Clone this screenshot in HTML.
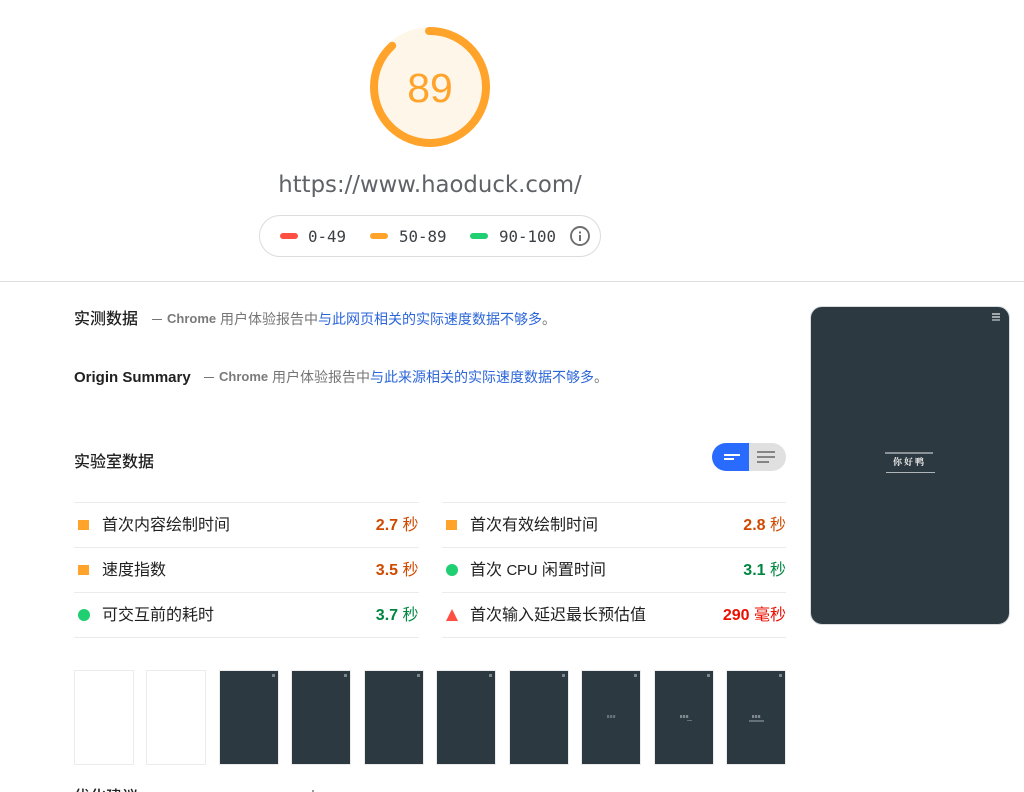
<!DOCTYPE html>
<html lang="zh-CN">
<head>
<meta charset="utf-8">
<title>PageSpeed Insights</title>
<style>
html,body{margin:0;padding:0;background:#fff;width:1024px;height:792px;overflow:hidden}
#w{position:absolute;left:0;top:0;width:1024px;height:792px;overflow:hidden;font-family:"Liberation Sans","Noto Sans CJK SC",sans-serif;color:#212121}
.a{position:absolute;white-space:nowrap}
.line{position:absolute;height:1px;background:#ebebeb}
.h{font-size:16px;font-weight:500;line-height:24px;color:#212121}
.d{font-size:14px;line-height:20px;color:#757575}
.c{font-size:13px;line-height:20px;font-weight:bold;color:#7a7a7a}
.d span{color:#2b66d9}
.dash{position:absolute;height:1px;width:10px;background:#757575}
.m{font-size:16px;line-height:24px;color:#212121}
.v{font-size:16px;line-height:24px;text-align:right}
.v b{font-weight:bold}
.o{color:#d04900}.g{color:#018642}.r{color:#eb0f00}
.sq{position:absolute;width:11px;height:10px;background:#ffa32a}
.ci{position:absolute;width:12px;height:12px;border-radius:50%;background:#1fcf71}
.thumb{position:absolute;top:670px;width:58px;height:93px;border:1px solid #ebebeb;background:#2d3940}
.thumb.w{background:#fff}
.thumb i{position:absolute;right:3px;top:3px;width:3px;height:3px;background:#7d868b}
.thumb u{position:absolute;left:25px;top:44px;width:9px;height:3px;background:repeating-linear-gradient(90deg,#7f888d 0 2px,#3d494f 2px 3px)}
.thumb s{position:absolute;left:22px;top:49px;width:15px;height:2px;background:#667177}
.pill{position:absolute;top:233px;width:18px;height:6px;border-radius:3px}
.lg{position:absolute;top:227px;font-family:"DejaVu Sans Mono","Liberation Mono",monospace;font-size:15.8px;line-height:20px;color:#3c4043}
</style>
</head>
<body>
<div id="w">
<svg class="a" style="left:370px;top:27px" width="120" height="120" viewBox="0 0 120 120">
<circle cx="60" cy="60" r="60" fill="#fff6ea"/>
<circle cx="60" cy="60" r="56" fill="none" stroke="#ffa32a" stroke-width="8" stroke-linecap="round" stroke-dasharray="311 352" transform="rotate(-91 60 60)"/>
</svg>
<div class="a" style="left:370px;top:60px;width:120px;text-align:center;font-size:41px;line-height:56px;color:#ffa32a">89</div>
<div class="a" style="left:230px;top:168px;width:400px;text-align:center;font-family:'DejaVu Sans',sans-serif;font-size:22.8px;line-height:34px;color:#5f6368">https://www.haoduck.com/</div>

<div class="a" style="left:259px;top:215px;width:340px;height:40px;border:1px solid #dcdcdc;border-radius:21px"></div>
<div class="pill" style="left:280px;background:#ff4e42"></div>
<div class="lg" style="left:308px">0-49</div>
<div class="pill" style="left:370px;background:#ffa32a"></div>
<div class="lg" style="left:399px">50-89</div>
<div class="pill" style="left:470px;background:#1fcf71"></div>
<div class="lg" style="left:499px">90-100</div>
<svg class="a" style="left:570px;top:226px" width="20" height="20" viewBox="0 0 20 20">
<circle cx="10" cy="10" r="9" fill="none" stroke="#6e6e6e" stroke-width="1.9"/>
<rect x="9" y="9" width="2" height="6" fill="#6e6e6e"/>
<rect x="9" y="5.5" width="2" height="2" fill="#6e6e6e"/>
</svg>
<div class="line" style="left:0;top:281px;width:1024px;background:#dedede"></div>

<div class="a h" style="left:74px;top:308px">实测数据</div>
<div class="dash" style="left:152px;top:319px"></div>
<div class="a c" style="left:167px;top:309px">Chrome</div>
<div class="a d" style="left:220px;top:309px">用户体验报告中<span>与此网页相关的实际速度数据不够多</span>。</div>

<div class="a h" style="left:74px;top:366px;font-size:15px;font-weight:bold">Origin Summary</div>
<div class="dash" style="left:204px;top:377px"></div>
<div class="a c" style="left:219px;top:367px">Chrome</div>
<div class="a d" style="left:272px;top:367px">用户体验报告中<span>与此来源相关的实际速度数据不够多</span>。</div>

<div class="a h" style="left:74px;top:451px">实验室数据</div>

<div class="a" style="left:712px;top:443px;width:37px;height:28px;background:#2a6bff;border-radius:14px 0 0 14px"></div>
<div class="a" style="left:749px;top:443px;width:37px;height:28px;background:#e0e0e0;border-radius:0 14px 14px 0"></div>
<div class="a" style="left:724px;top:454px;width:16px;height:2px;background:#fff"></div>
<div class="a" style="left:724px;top:458px;width:10px;height:2px;background:#fff"></div>
<div class="a" style="left:757px;top:451px;width:18px;height:2px;background:#858585"></div>
<div class="a" style="left:757px;top:456px;width:18px;height:2px;background:#858585"></div>
<div class="a" style="left:757px;top:461px;width:12px;height:2px;background:#858585"></div>

<div class="a" style="left:810px;top:306px;width:198px;height:317px;background:#2d3940;border:1px solid #d9dcde;border-radius:12px"></div>
<div class="a" style="left:992px;top:313px;width:8px;height:2px;background:#a2a8ab"></div>
<div class="a" style="left:992px;top:316px;width:8px;height:2px;background:#a2a8ab"></div>
<div class="a" style="left:992px;top:319px;width:8px;height:2px;background:#8a9297"></div>
<div class="a" style="left:885px;top:452px;width:48px;height:2px;background:#8a9297"></div>
<div class="a" style="left:886px;top:472px;width:49px;height:1px;background:#b0b5b8"></div>
<div class="a" style="left:885px;top:456px;width:49px;text-align:center;font-size:9px;line-height:12px;font-weight:bold;color:#f0f0f0;letter-spacing:2px;font-family:'Noto Serif CJK SC',serif">你好鸭</div>

<div class="line" style="left:74px;top:502px;width:345px"></div>
<div class="line" style="left:74px;top:547px;width:345px"></div>
<div class="line" style="left:74px;top:592px;width:345px"></div>
<div class="line" style="left:74px;top:637px;width:345px"></div>
<div class="line" style="left:442px;top:502px;width:344px"></div>
<div class="line" style="left:442px;top:547px;width:344px"></div>
<div class="line" style="left:442px;top:592px;width:344px"></div>
<div class="line" style="left:442px;top:637px;width:344px"></div>

<div class="sq" style="left:78px;top:520px"></div>
<div class="a m" style="left:102px;top:514px">首次内容绘制时间</div>
<div class="a v o" style="right:605.5px;top:514px"><b>2.7</b> 秒</div>
<div class="sq" style="left:78px;top:565px"></div>
<div class="a m" style="left:102px;top:559px">速度指数</div>
<div class="a v o" style="right:605.5px;top:559px"><b>3.5</b> 秒</div>
<div class="ci" style="left:78px;top:609px"></div>
<div class="a m" style="left:102px;top:604px">可交互前的耗时</div>
<div class="a v g" style="right:605.5px;top:604px"><b>3.7</b> 秒</div>

<div class="sq" style="left:446px;top:520px"></div>
<div class="a m" style="left:470px;top:514px">首次有效绘制时间</div>
<div class="a v o" style="right:238px;top:514px"><b>2.8</b> 秒</div>
<div class="ci" style="left:446px;top:564px"></div>
<div class="a m" style="left:470px;top:559px">首次 <span style="font-size:15px;letter-spacing:-.25px">CPU</span> 闲置时间</div>
<div class="a v g" style="right:238px;top:559px"><b>3.1</b> 秒</div>
<svg class="a" style="left:446px;top:609px" width="12" height="12" viewBox="0 0 12 12"><path d="M6 0 L12 12 L0 12 Z" fill="#ff4e42"/></svg>
<div class="a m" style="left:470px;top:604px">首次输入延迟最长预估值</div>
<div class="a v r" style="right:238px;top:604px"><b>290</b> 毫秒</div>

<div class="thumb w" style="left:74px"></div>
<div class="thumb w" style="left:146px"></div>
<div class="thumb" style="left:219px"><i></i></div>
<div class="thumb" style="left:291px"><i></i></div>
<div class="thumb" style="left:364px"><i></i></div>
<div class="thumb" style="left:436px"><i></i></div>
<div class="thumb" style="left:509px"><i></i></div>
<div class="thumb" style="left:581px"><i></i><u style="opacity:.7"></u></div>
<div class="thumb" style="left:654px"><i></i><u></u><s style="left:32px;width:5px;height:1px"></s></div>
<div class="thumb" style="left:726px"><i></i><u></u><s></s></div>

<div class="a h" style="left:74px;top:786px">优化建议</div>
<div class="a" style="left:312px;top:790px;width:2px;height:2px;background:#9a9a9a"></div>
</div>
</body>
</html>
